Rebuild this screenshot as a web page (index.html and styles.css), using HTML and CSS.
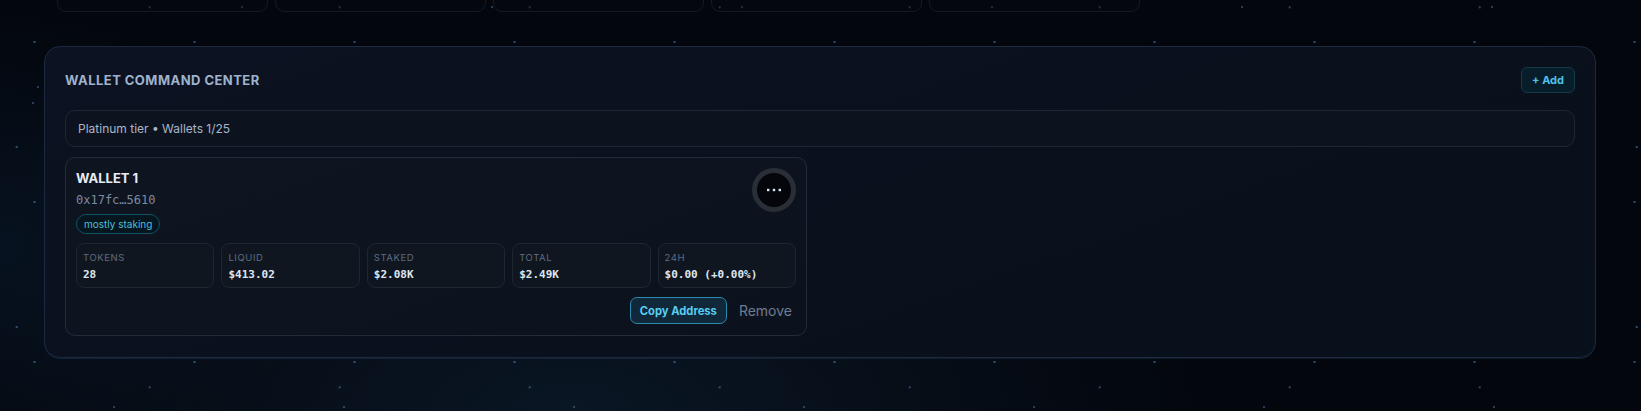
FILE: index.html
```html
<!DOCTYPE html>
<html lang="en">
<head>
<meta charset="utf-8">
<title>Wallet Command Center</title>
<link rel="stylesheet" href="styles.css">
</head>
<body>
  <div class="top-row">
    <div class="top-card"></div>
    <div class="top-card"></div>
    <div class="top-card"></div>
    <div class="top-card"></div>
    <div class="top-card"></div>
  </div>

  <section class="panel">
    <header class="panel-head">
      <h2 class="panel-title">WALLET COMMAND CENTER</h2>
      <button class="btn-add">+ Add</button>
    </header>

    <div class="tier-bar">Platinum tier • Wallets 1/25</div>

    <div class="wallet-grid">
      <article class="wallet-card">
        <div class="wallet-head">
          <div class="wallet-info">
            <div class="wallet-name">WALLET 1</div>
            <div class="wallet-addr">0x17fc…5610</div>
            <span class="badge">mostly staking</span>
          </div>
          <button class="more-btn" aria-label="More">
            <svg width="16" height="4" viewBox="0 0 16 4"><rect x="1" y="0.8" width="2.4" height="2.4" fill="#dbe6f3"/><rect x="6.8" y="0.8" width="2.4" height="2.4" fill="#dbe6f3"/><rect x="12.6" y="0.8" width="2.4" height="2.4" fill="#dbe6f3"/></svg>
          </button>
        </div>

        <div class="stats">
          <div class="stat"><div class="stat-label">TOKENS</div><div class="stat-value">28</div></div>
          <div class="stat"><div class="stat-label">LIQUID</div><div class="stat-value">$413.02</div></div>
          <div class="stat"><div class="stat-label">STAKED</div><div class="stat-value">$2.08K</div></div>
          <div class="stat"><div class="stat-label">TOTAL</div><div class="stat-value">$2.49K</div></div>
          <div class="stat"><div class="stat-label">24H</div><div class="stat-value">$0.00 (+0.00%)</div></div>
        </div>

        <div class="wallet-actions">
          <button class="btn-copy">Copy Address</button>
          <button class="btn-remove">Remove</button>
        </div>
      </article>
    </div>
  </section>
</body>
</html>
```

FILE: styles.css
```css
* { box-sizing: border-box; }

html, body { height: 100%; }

body {
  margin: 0;
  font-family: "Inter", "Noto Sans", sans-serif;
  color: #dfe6f0;
  overflow: hidden;
  background-color: #03060c;
  background-image:
    radial-gradient(circle at 1px 1px, rgba(80,130,180,0.6) 1px, transparent 1.6px),
    radial-gradient(circle at 1px 1px, rgba(80,130,180,0.5) 1px, transparent 1.6px),
    radial-gradient(circle at 1px 1px, rgba(80,130,180,0.55) 1px, transparent 1.6px),
    radial-gradient(circle at 1px 1px, rgba(80,130,180,0.45) 1px, transparent 1.6px),
    radial-gradient(circle at 1px 1px, rgba(80,130,180,0.45) 1px, transparent 1.6px),
    radial-gradient(circle at 1px 1px, rgba(80,130,180,0.45) 1px, transparent 1.6px),
    radial-gradient(circle at 1px 1px, rgba(80,130,180,0.45) 1px, transparent 1.6px),
    radial-gradient(ellipse 40% 70% at 35% 100%, #0a1624 0%, rgba(10,22,36,0) 100%),
    radial-gradient(ellipse 20% 60% at 0% 60%, #071220 0%, rgba(7,18,32,0) 100%);
  background-size:
    160px 160px,
    190px 190px,
    270px 180px,
    250px 250px,
    230px 230px,
    2000px 2000px,
    2000px 2000px,
    100% 100%,
    100% 100%;
  background-position:
    33.5px 41px,
    148.7px 6.3px,
    15.7px 146px,
    241px 6px,
    113px 176px,
    37px 86px,
    32.3px 102.3px,
    0 0,
    0 0;
  background-repeat: repeat, repeat, repeat, repeat, repeat, no-repeat, no-repeat, no-repeat, no-repeat;
}

/* cut-off cards above */
.top-row {
  display: flex;
  gap: 7px;
  margin-left: 57px;
  height: 12px;
  overflow: hidden;
}

.top-card {
  flex: 0 0 211px;
  height: 60px;
  margin-top: -48px;
  border: 1px solid #131a26;
  border-radius: 9px;
  background: rgba(8,12,20,0.35);
}

/* main panel */
.panel {
  margin: 34px 45px 0 44px;
  padding: 20px 20px 21px;
  border: 1px solid #1c2a40;
  border-radius: 16px;
  background: linear-gradient(160deg, #0c1221 0%, #0a101c 55%, #08101b 100%);
  box-shadow: 0 1px 0 rgba(40,64,96,0.35);
}

.panel-head {
  display: flex;
  align-items: center;
  justify-content: space-between;
  height: 26px;
}

.panel-title {
  margin: 0;
  font-size: 13px;
  font-weight: 700;
  letter-spacing: 0.035em;
  color: #9fb2cc;
}

.btn-add {
  height: 26px;
  padding: 0 10px;
  font-family: inherit;
  font-size: 11px;
  font-weight: 700;
  color: #4fc4ea;
  background: #081d2a;
  border: 1px solid #143a4a;
  border-radius: 6px;
}

.tier-bar {
  margin-top: 17px;
  height: 37px;
  display: flex;
  align-items: center;
  padding: 0 12px;
  font-size: 12px;
  color: #a9b6c9;
  background: #0d131e;
  border: 1px solid #1f2735;
  border-radius: 10px;
}

.wallet-grid {
  margin-top: 10px;
  display: grid;
  grid-template-columns: repeat(2, 1fr);
  gap: 26px;
}

.wallet-card {
  padding: 10px 10px 11px;
  background: linear-gradient(160deg, #0e1521 0%, #0c121d 100%);
  border: 1px solid #222b39;
  border-radius: 10px;
}

.wallet-head {
  display: flex;
  justify-content: space-between;
  align-items: flex-start;
}

.wallet-info {
  display: flex;
  flex-direction: column;
  align-items: flex-start;
}

.wallet-name {
  font-size: 13px;
  font-weight: 700;
  line-height: 20px;
  color: #e8edf5;
}

.wallet-addr {
  margin-top: 5px;
  font-family: "DejaVu Sans Mono", "Liberation Mono", monospace;
  font-size: 12px;
  line-height: 14px;
  color: #7d8ba2;
}

.badge {
  margin-top: 7px;
  height: 20px;
  display: inline-flex;
  align-items: center;
  padding: 0 7px;
  font-size: 10px;
  color: #4dbfdc;
  background: #06161e;
  border: 1px solid #0f5364;
  border-radius: 10px;
}

.more-btn {
  width: 44px;
  height: 44px;
  padding: 0;
  display: flex;
  align-items: center;
  justify-content: center;
  background: #04060b;
  border: 5px solid #2a2e36;
  border-radius: 50%;
}

.stats {
  margin-top: 9px;
  display: grid;
  grid-template-columns: repeat(5, 1fr);
  gap: 7px;
}

.stat {
  height: 45px;
  padding: 8px 6px 0;
  background: #10161f;
  border: 1px solid #1e2632;
  border-radius: 8px;
}

.stat-label {
  font-size: 9.5px;
  line-height: 12px;
  letter-spacing: 0.06em;
  color: #5e6c82;
}

.stat-value {
  margin-top: 4px;
  font-family: "DejaVu Sans Mono", "Liberation Mono", monospace;
  font-size: 11px;
  font-weight: 700;
  line-height: 13px;
  color: #dfe6f0;
}

.wallet-actions {
  margin-top: 9px;
  display: flex;
  justify-content: flex-end;
  align-items: center;
  gap: 8px;
}

.btn-copy {
  height: 27px;
  padding: 0 9px;
  font-family: inherit;
  font-size: 11.2px;
  font-weight: 700;
  color: #5acdf0;
  background: #10283a;
  border: 1px solid #2a89ac;
  border-radius: 7px;
}

.btn-remove {
  height: 27px;
  padding: 0 4px;
  font-family: inherit;
  font-size: 14px;
  color: #6d7b93;
  background: transparent;
  border: none;
}
```
